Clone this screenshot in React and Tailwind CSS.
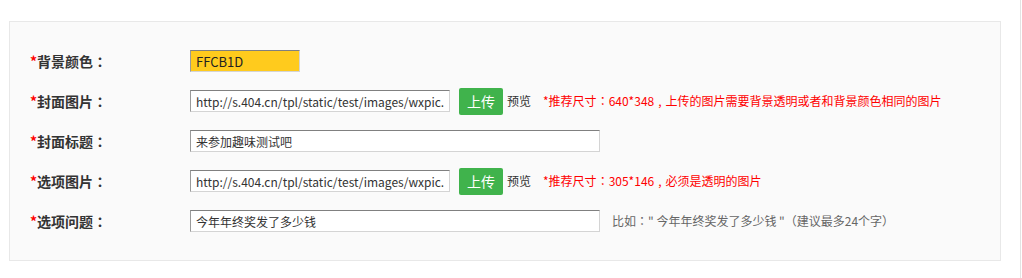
const cjk = { fontFamily: '"Microsoft YaHei", "Noto Sans CJK SC", "Open Sans", sans-serif' };

const inputCls =
  "h-[22px] px-[5px] text-[12px] border border-t-[#808080] border-l-[#9a9a9a] border-r-[#d4d4d4] border-b-[#d4d4d4] outline-none";

// full-width colon centred like YaHei renders it
const Colon = () => <span style={{ fontFamily: '"Noto Sans CJK JP", sans-serif' }}>：</span>;

const Label = ({ children }) => (
  <div className="w-[160px] shrink-0 text-[14px] font-bold text-[#333]">
    <span className="text-[#ff0000]">*</span>
    {children}
    <Colon />
  </div>
);

const UploadRow = ({ label, url, size, tip }) => (
  <div className="flex h-[40px] items-center">
    <Label>{label}</Label>
    <input readOnly value={url} className={`${inputCls} w-[260px] bg-white text-[#333]`} style={cjk} />
    <button className="ml-[9px] h-[27px] w-[44px] rounded-[2px] bg-[#40b34c] text-[14px] text-white">
      上传
    </button>
    <span className="ml-[4px] text-[12px] text-[#333]">预览</span>
    <span className="ml-[12px] text-[12px] text-[#ff0000]">
      *推荐尺寸
      <Colon />
      {size}
      <span className="px-[4px]">,</span>
      {tip}
    </span>
  </div>
);

export default function App() {
  return (
    <div className="h-[278px] w-[1021px] border-r border-[#e3e3e3] bg-white pl-[9px] pt-[21px]" style={cjk}>
      <div className="w-[992px] border border-[#e8e8e8] bg-[#fafafa] pl-[20px] pt-[19px] pb-[19px]">
        <div className="flex h-[40px] items-center">
          <Label>背景颜色</Label>
          <input
            readOnly
            value="FFCB1D"
            className={`${inputCls} w-[110px] bg-[#ffcb1d] text-[13px] text-[#222]`}
            style={cjk}
          />
        </div>
        <UploadRow
          label="封面图片"
          url="http://s.404.cn/tpl/static/test/images/wxpic.png"
          size="640*348"
          tip="上传的图片需要背景透明或者和背景颜色相同的图片"
        />
        <div className="flex h-[40px] items-center">
          <Label>封面标题</Label>
          <input readOnly value="来参加趣味测试吧" className={`${inputCls} w-[410px] bg-white text-[#333]`} style={cjk} />
        </div>
        <UploadRow
          label="选项图片"
          url="http://s.404.cn/tpl/static/test/images/wxpic.png"
          size="305*146"
          tip="必须是透明的图片"
        />
        <div className="flex h-[40px] items-center">
          <Label>选项问题</Label>
          <input readOnly value="今年年终奖发了多少钱" className={`${inputCls} w-[410px] bg-white text-[#333]`} style={cjk} />
          <span className="ml-[12px] text-[12px] text-[#666]">
            比如
            <Colon />" 今年年终奖发了多少钱 "（建议最多24个字）
          </span>
        </div>
      </div>
    </div>
  );
}
